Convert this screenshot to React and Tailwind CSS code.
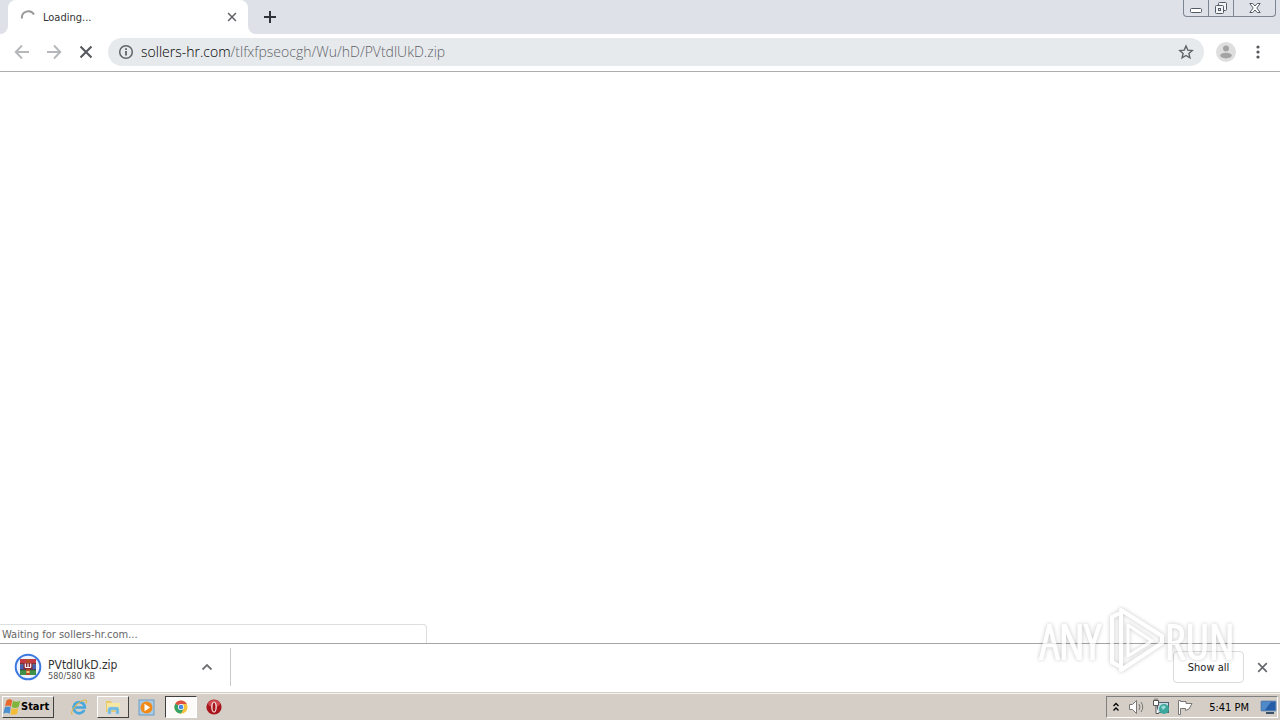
import React from 'react';

function CloseIcon({ className }) {
  return (
    <svg viewBox="0 0 12 12" className={className} fill="none" stroke="currentColor" strokeWidth="1.8" aria-hidden="true">
      <path d="M1.3 1.3 10.7 10.7M10.7 1.3 1.3 10.7" />
    </svg>
  );
}

function TabStrip() {
  return (
    <div className="relative flex h-[34px] items-start bg-[#dee1e8]">
      <div className="h-full w-2 shrink-0 bg-white">
        <div className="h-full rounded-br-lg bg-[#dee1e8]" />
      </div>
      <div role="tab" aria-selected="true" className="flex h-full w-60 items-center rounded-t-lg bg-white pl-3 pr-2.5">
        <svg viewBox="0 0 16 16" className="h-4 w-4" fill="none" stroke="#999" strokeWidth="2" aria-hidden="true">
          <path d="M1.900 9.500A6.500 6.500 0 0 1 14 5.600" />
        </svg>
        <span className="ml-[7px] flex-1 pt-0.5 text-[11px] text-[#333]">Loading...</span>
        <button aria-label="Close tab" className="grid h-4 w-3 place-items-center text-[#5f6368]">
          <CloseIcon className="h-2.5 w-2.5" />
        </button>
      </div>
      <div className="h-full w-2 shrink-0 bg-white">
        <div className="h-full rounded-bl-lg bg-[#dee1e8]" />
      </div>
      <button aria-label="New tab" className="ml-1 grid h-[34px] w-5 place-items-center">
        <svg viewBox="0 0 12 12" className="h-3 w-3" stroke="#30343a" strokeWidth="2" aria-hidden="true">
          <path d="M6 0V12M0 6H12" />
        </svg>
      </button>
      <div className="ml-auto mr-1 flex h-[17px] rounded-b border border-t-0 border-[#7d8591]">
        <button aria-label="Minimize" className="grid w-[25px] place-items-center border-r border-[#7d8591]">
          <svg viewBox="0 0 12 16" className="h-4 w-3" fill="#fff" stroke="#555b66" aria-hidden="true">
            <rect x="0.5" y="8.5" width="11" height="4" rx="1" />
          </svg>
        </button>
        <button aria-label="Restore" className="grid w-[25px] place-items-center border-r border-[#7d8591]">
          <svg viewBox="0 0 14 16" className="h-4 w-3.5" fill="#f3f4f6" stroke="#555b66" aria-hidden="true">
            <rect x="4.5" y="2.5" width="8" height="8" rx="1" />
            <rect x="1.5" y="5.5" width="8" height="8" rx="1" />
            <rect x="4.5" y="8.5" width="2" height="2" />
          </svg>
        </button>
        <button aria-label="Close" className="grid w-[41px] place-items-center">
          <svg viewBox="0 0 12 16" className="h-4 w-3" fill="#fff" stroke="#555b66" aria-hidden="true">
            <path d="M.8 3.5H3.7L6 6 8.3 3.5h2.9L7.8 8l3.4 4.5H8.3L6 10l-2.3 2.5H.8L4.2 8Z" />
          </svg>
        </button>
      </div>
    </div>
  );
}

function Toolbar() {
  return (
    <div className="flex h-[38px] items-center border-b border-[#adadad] bg-white pb-px pl-2 pr-3">
      <button aria-label="Back" className="grid h-7 w-7 place-items-center text-[#b5b7ba]">
        <svg viewBox="0 0 16 16" className="h-4 w-4" fill="none" stroke="currentColor" strokeWidth="1.9" aria-hidden="true">
          <path d="M15 8H2M8 1.5 1.7 8 8 14.5" />
        </svg>
      </button>
      <button aria-label="Forward" className="ml-1 grid h-7 w-7 place-items-center text-[#b5b7ba]">
        <svg viewBox="0 0 16 16" className="h-4 w-4" fill="none" stroke="currentColor" strokeWidth="1.9" aria-hidden="true">
          <path d="M1 8H14M8 1.5 14.3 8 8 14.5" />
        </svg>
      </button>
      <button aria-label="Stop loading" className="ml-1 grid h-7 w-7 place-items-center text-[#55585d]">
        <CloseIcon className="h-3.5 w-3.5" />
      </button>
      <div className="ml-2 flex h-7 flex-1 items-center rounded-full bg-[#e7eaed] px-2.5">
        <svg viewBox="0 0 16 16" className="h-4 w-4" fill="none" stroke="#5f6368" strokeWidth="1.5" aria-hidden="true">
          <circle cx="8" cy="8" r="6.3" />
          <path d="M8 7V11.5M8 4.3V6" strokeWidth="1.8" />
        </svg>
        <div role="textbox" aria-label="Address" tabIndex={0} className="ml-[7px] flex-1 font-['Open_Sans',sans-serif] text-[14px] font-light leading-5 text-[#5f6368]">
          <span className="text-black">sollers-hr.com</span>/tlfxfpseocgh/Wu/hD/PVtdlUkD.zip
        </div>
        <button aria-label="Bookmark this page" className="grid h-4 w-4 place-items-center">
          <svg viewBox="0 0 16 16" className="h-4 w-4" fill="none" stroke="#5f6368" strokeWidth="1.4" aria-hidden="true">
            <path d="m8 2 1.8 4.1 4.4.4-3.3 2.9 1 4.4L8 11.5l-3.9 2.3 1-4.4L1.8 6.5l4.4-.4Z" />
          </svg>
        </button>
      </div>
      <button aria-label="Profile" className="ml-3 grid h-5 w-5 place-items-center">
        <svg viewBox="0 0 20 20" className="h-5 w-5" aria-hidden="true">
          <circle cx="10" cy="10" r="10" fill="#dedede" />
          <circle cx="10" cy="6.5" r="3" fill="#a3a3a3" />
          <ellipse cx="10" cy="13.6" rx="5.8" ry="2.8" fill="#a3a3a3" />
        </svg>
      </button>
      <button aria-label="Browser menu" className="ml-3 grid h-5 w-5 place-items-center">
        <svg viewBox="0 0 4 14" className="h-3.5 w-1" fill="#55585d" aria-hidden="true">
          <circle cx="2" cy="2" r="1.6" />
          <circle cx="2" cy="7" r="1.6" />
          <circle cx="2" cy="12" r="1.6" />
        </svg>
      </button>
    </div>
  );
}

function ArchiveIcon() {
  return (
    <svg viewBox="0 0 28 28" className="h-7 w-7" aria-hidden="true">
      <circle cx="14" cy="14" r="12.3" fill="#eef3fd" stroke="#3b78e0" strokeWidth="2" />
      <path d="M6 6H22V11H6Z" fill="#c23a45" />
      <path d="M6 11.5H22V16.5H6Z" fill="#4562b3" />
      <path d="M6 17H22V22H6Z" fill="#3f9149" />
      <path d="M6 11H22M6 16.7H22" stroke="#3b2630" />
      <path d="M12 6H16V22H12Z" fill="#b54b28" />
      <path d="M9.500 10H18.500V16H9.500Z" fill="#872733" />
      <path d="M11.300 10.500V14.500M14 10.500V14.500M16.700 10.500V14.500M11.300 14.500H16.700" stroke="#fff" strokeWidth="1.2" />
      <path d="M12.5 19H15.5" stroke="#ead17c" strokeWidth="2" />
    </svg>
  );
}

function DownloadBar() {
  return (
    <section aria-label="Downloads" className="flex h-[50px] items-center border-b border-t border-b-[#d3cfc9] border-t-[#a5a5a5] bg-white pb-0.5 pr-3">
      <div className="flex h-[38px] w-[231px] items-center border-r border-[#c8c8c8] pl-3.5">
        <ArchiveIcon />
        <div className="ml-1.5 flex-1 pt-1.5">
          <div className="text-[12px] leading-3 text-[#333]">PVtdlUkD.zip</div>
          <div className="text-[9px] leading-[10px] text-[#555]">580/580 KB</div>
        </div>
        <button aria-label="Download options" className="mr-[15px] grid h-6 w-4 place-items-center">
          <svg viewBox="0 0 12 8" className="h-2 w-3" fill="none" stroke="#707276" strokeWidth="1.8" aria-hidden="true">
            <path d="M1.5 6.5 6 2 10.5 6.5" />
          </svg>
        </button>
      </div>
      <button className="ml-auto h-8 w-[71px] rounded border border-[#dadce0] pt-0.5 text-[11px] text-[#222]">Show all</button>
      <button aria-label="Close downloads bar" className="ml-3 grid h-6 w-3 place-items-center text-[#65686d]">
        <CloseIcon className="h-[11px] w-[11px]" />
      </button>
    </section>
  );
}

function Watermark() {
  return (
    <svg
      role="img"
      aria-label="ANY RUN"
      viewBox="0 0 200 70"
      className="pointer-events-none absolute bottom-[45px] right-[45px] h-[70px] w-[200px] opacity-75 drop-shadow-[0_0_2px_rgba(0,0,0,0.3)]"
      fill="none"
      stroke="#fff"
      strokeWidth="4"
      strokeLinejoin="round"
      strokeLinecap="round"
    >
      <g className="font-['Open_Sans_Condensed_Light','Open_Sans_Condensed',sans-serif] text-[48px]" fill="#fff" strokeWidth="2">
        <text x="5" y="54">ANY</text>
        <text x="130" y="54">RUN</text>
      </g>
      <path d="M77 12V57L84 61M77 12 83 9" />
      <path d="M86 5V65L127 38V31Z" />
      <path d="M93 20V51L117 36Z" strokeWidth="3" />
    </svg>
  );
}

function StartLogo() {
  return (
    <svg viewBox="0 0 18 16" className="h-4 w-[18px]" aria-hidden="true">
      <path d="M3.500 1.500Q6.500-.8 9.300 1.300L8 7.700Q5 5.500 2 7.700Z" fill="#e8672c" />
      <path d="M10 1.800Q13.500 4 17.300 1.500L15.600 8Q12 9.800 8.800 8Z" fill="#7fb53b" />
      <path d="M1.800 8.500Q5 6.500 7.800 8.500L6.700 14.800Q3.500 12.500.3 14.800Z" fill="#4a90d0" />
      <path d="M8.600 8.900Q12 10.700 15.400 8.900L14 15Q11 16.500 7.500 15.200Z" fill="#f2bd36" />
    </svg>
  );
}

function Taskbar() {
  return (
    <footer className="flex h-[27px] items-center border-t border-[#f7f5f2] bg-[#d5cec6] px-0.5">
      <button className="flex h-[22px] w-[52px] items-center border border-b-[#404040] border-l-white border-r-[#404040] border-t-white text-[11px] font-bold text-black">
        <StartLogo />
        <span>Start</span>
      </button>
      <button aria-label="Internet Explorer" className="ml-4 grid h-5 w-[18px] place-items-center">
        <svg viewBox="0 0 18 18" className="h-[18px] w-[18px]" fill="none" aria-hidden="true">
          <path d="M14.300 12A5.600 5.600 0 1 1 14.800 9.500H5" stroke="#48a7dd" strokeWidth="2.700" />
          <path d="M2.500 16.500C-1.500 15 8 3 14.500 2Q17.500 1.500 16 5.500" stroke="#dfb752" strokeWidth="1.100" />
        </svg>
      </button>
      <button aria-label="File Explorer" className="ml-[9px] grid h-[22px] w-8 place-items-center border border-b-[#404040] border-l-white border-r-[#404040] border-t-white bg-[#dfd9d2]">
        <svg viewBox="0 0 18 18" className="h-[18px] w-[18px]" aria-hidden="true">
          <path d="M2 3H7L8 5H15V14H2Z" fill="#e9c967" />
          <path d="M3 5H16V12H3Z" fill="#f8e7a0" />
          <path d="M4 16V11Q4 9 6 9H13Q15 9 15 11V16H12V12H7V16Z" fill="#72b9df" stroke="#a3d3ec" strokeWidth=".5" />
        </svg>
      </button>
      <button aria-label="Media Player" className="ml-[9px] grid h-5 w-[17px] place-items-center">
        <svg viewBox="0 0 17 17" className="h-[17px] w-[17px]" aria-hidden="true">
          <rect x="1" y="1" width="15" height="15" fill="#aacbe6" stroke="#6c9bc5" />
          <circle cx="8.500" cy="8.500" r="6" fill="#f18a16" />
          <path d="m6.500 4.800 5.500 3.700-5.500 3.700Z" fill="#fff" />
        </svg>
      </button>
      <button aria-label="Chrome" className="ml-2.5 grid h-[22px] w-8 place-items-center border border-b-white border-l-[#404040] border-r-white border-t-[#404040] bg-[#fcfbf9]">
        <svg viewBox="0 0 16 16" className="h-3.5 w-3.5" aria-hidden="true">
          <circle cx="8" cy="8" r="7.500" fill="#f5c33b" />
          <path d="M8 8 1.500 4.200A7.500 7.500 0 0 1 14.500 4.500H8Z" fill="#df5044" />
          <path d="M8 8 1.500 4.200A7.500 7.500 0 0 0 8 15.500L11 10Z" fill="#35a267" />
          <circle cx="8" cy="8" r="3.500" fill="#fff" />
          <circle cx="8" cy="8" r="2.700" fill="#4b88df" />
        </svg>
      </button>
      <button aria-label="Opera" className="ml-[9px] grid h-5 w-4 place-items-center">
        <svg viewBox="0 0 16 16" className="h-4 w-4" aria-hidden="true">
          <circle cx="8" cy="8" r="7.600" fill="#a8151c" />
          <ellipse cx="8" cy="4.500" rx="6" ry="3.600" fill="#cf4a4f" />
          <ellipse cx="8" cy="8" rx="2.800" ry="5.600" fill="#f7ebe9" />
          <ellipse cx="8" cy="8" rx="1.500" ry="4.600" fill="#a8151c" />
        </svg>
      </button>
      <div className="ml-auto flex h-[22px] items-center border border-b-white border-l-[#808080] border-r-white border-t-[#808080] pl-[5px]">
        <button aria-label="Show hidden icons" className="grid h-4 w-2 place-items-center">
          <svg viewBox="0 0 8 10" className="h-2.5 w-2" fill="none" stroke="#000" strokeWidth="1.300" aria-hidden="true">
            <path d="M1.500 4 4 1.500 6.500 4M1.500 8.500 4 6 6.500 8.500" />
          </svg>
        </button>
        <svg viewBox="0 0 18 16" className="ml-2 h-4 w-[18px]" fill="#fff" stroke="#777" aria-label="Volume" role="img">
          <path d="M1.500 5.500H4.500L8.500 1.500V14.500L4.500 10.500H1.500Z" />
          <path d="M11 5Q13 8 11 11M13 3Q16.500 8 13 13" fill="none" />
        </svg>
        <svg viewBox="0 0 18 18" className="ml-1.5 h-[18px] w-[18px]" aria-label="Network" role="img">
          <rect x="5.500" y="4.500" width="11" height="10" fill="#c6dbe3" stroke="#4c626c" />
          <circle cx="12" cy="11" r="5" fill="#3ba79d" />
          <path d="M9 9Q12 6 14 9L11 12Z" fill="#9adbd6" />
          <path d="M1.500 2.500H6.500V7.500H1.500ZM3 .500V3M5 .500V3M4 7.500V15.500H7" fill="#fff" stroke="#555" />
        </svg>
        <svg viewBox="0 0 18 16" className="ml-1.5 h-4 w-[18px]" fill="#fff" stroke="#777" aria-label="Action Center" role="img">
          <path d="M2.500 1.500V15.500H4.500V9.500H9.500V11.500L13 10 16 4.500H10V2.500H4.500V1.500Z" />
        </svg>
        <time className="ml-[15px] pt-0.5 text-[11px] text-black">5:41 PM</time>
        <button aria-label="Show desktop" className="ml-2.5 grid h-5 w-[18px] place-items-center">
          <svg viewBox="0 0 17 14" className="h-3.5 w-[17px]" aria-hidden="true">
            <path d="M1 1H16V11H1Z" fill="#245ca8" stroke="#7898bc" />
            <path d="M2 2H11L5 10H2Z" fill="#4f89c9" />
            <path d="M6 13H14" stroke="#39506b" strokeWidth="2" />
          </svg>
        </button>
      </div>
    </footer>
  );
}

export default function App() {
  return (
    <div className="relative flex min-h-screen flex-col bg-white font-['DejaVu_Sans_Condensed','DejaVu_Sans',sans-serif]">
      <header>
        <TabStrip />
        <Toolbar />
      </header>
      <main className="flex flex-1 items-end">
        <div role="status" className="h-[19px] w-1/3 rounded-tr border border-b-0 border-l-0 border-[#dcdee0] pl-0.5 text-[11px] leading-5 text-[#666]">
          Waiting for sollers-hr.com...
        </div>
      </main>
      <DownloadBar />
      <Taskbar />
      <Watermark />
    </div>
  );
}
